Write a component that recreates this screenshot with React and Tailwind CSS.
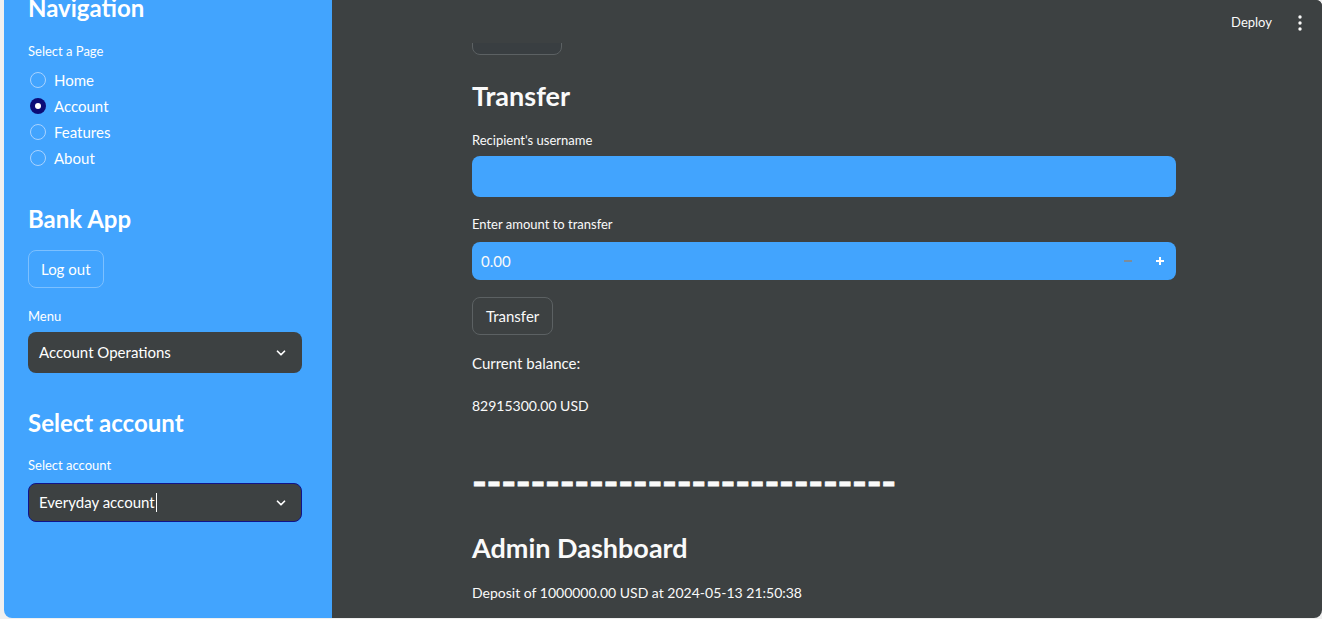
import { useState } from "react";

const font = { fontFamily: '"Lato", "Liberation Sans", sans-serif' };

function Chevron() {
  return (
    <svg width="14" height="14" viewBox="0 0 24 24" fill="none" stroke="currentColor" strokeWidth="3" strokeLinecap="round" strokeLinejoin="round">
      <path d="M6 9l6 6 6-6" />
    </svg>
  );
}

function Radio({ label, checked }) {
  return (
    <div className="flex items-center h-[26px] gap-[8px]">
      {checked ? (
        <span className="ml-[2px] w-[16px] h-[16px] rounded-full bg-[#0b0c77] flex items-center justify-center">
          <span className="w-[6px] h-[6px] rounded-full bg-white" />
        </span>
      ) : (
        <span className="ml-[2px] w-[16px] h-[16px] rounded-full border border-[#a9d3ff]" />
      )}
      <span className="text-[15px] text-white">{label}</span>
    </div>
  );
}

function Sidebar() {
  return (
    <div className="w-[328px] shrink-0 bg-[#42a4fe] text-white pl-[24px] pr-[30px] overflow-hidden">
      <h1 className="mt-[-8px] text-[24px] leading-[32px] font-bold">Navigation</h1>
      <p className="mt-[17px] text-[13px] leading-[20px]">Select a Page</p>
      <div className="mt-[6px]">
        <Radio label="Home" />
        <Radio label="Account" checked />
        <Radio label="Features" />
        <Radio label="About" />
      </div>
      <h2 className="mt-[32px] text-[24px] leading-[32px] font-bold">Bank App</h2>
      <button className="mt-[15px] h-[38px] px-[12px] rounded-[8px] border border-[#7cc0ff] text-[15px]">
        Log out
      </button>
      <p className="mt-[18px] text-[13px] leading-[20px]">Menu</p>
      <div className="mt-[6px] h-[41px] rounded-[8px] bg-[#3d4142] flex items-center justify-between pl-[11px] pr-[14px] text-[15px]">
        <span>Account Operations</span>
        <Chevron />
      </div>
      <h2 className="mt-[34px] text-[24px] leading-[32px] font-bold">Select account</h2>
      <p className="mt-[16px] text-[13px] leading-[20px]">Select account</p>
      <div className="mt-[8px] h-[39px] rounded-[8px] bg-[#3d4142] border border-[#10138a] flex items-center justify-between pl-[10px] pr-[13px] text-[15px]">
        <span className="flex items-center">
          Everyday account
          <span className="ml-[1px] w-[1px] h-[19px] bg-white" />
        </span>
        <Chevron />
      </div>
    </div>
  );
}

function Main() {
  const [amount] = useState("0.00");
  return (
    <div className="relative flex-1 bg-[#3d4142] text-[#fafafa] overflow-hidden">
      <div className="absolute top-0 left-0 right-0 h-[43px] bg-[#3d4142] flex items-center justify-end pr-[20px] gap-[26px] z-10">
        <span className="text-[13px] mt-[2px]">Deploy</span>
        <svg width="4" height="16" viewBox="0 0 4 16" className="mt-[2px]">
          <circle cx="2" cy="2" r="1.7" fill="#fafafa" />
          <circle cx="2" cy="8" r="1.7" fill="#fafafa" />
          <circle cx="2" cy="14" r="1.7" fill="#fafafa" />
        </svg>
      </div>
      <div className="pl-[140px] w-[844px] pt-[17px]">
        <div className="w-[90px] h-[38px] rounded-[8px] border border-[#5c6163] bg-[#393e41]" />
        <h2 className="mt-[21px] text-[27px] leading-[40px] font-bold">Transfer</h2>
        <p className="mt-[14px] text-[13px] leading-[20px]">Recipient's username</p>
        <div className="mt-[6px] h-[41px] rounded-[8px] bg-[#42a4fe]" />
        <p className="mt-[17px] text-[13px] leading-[20px]">Enter amount to transfer</p>
        <div className="mt-[8px] h-[38px] rounded-[8px] bg-[#42a4fe] flex items-center pl-[9px] text-[15px]">
          <span className="flex-1">{amount}</span>
          <span className="w-[32px] flex justify-center">
            <span className="w-[8px] h-[2px] bg-[#7e8c99]" />
          </span>
          <span className="w-[32px] flex justify-center text-white">
            <svg width="10" height="10" viewBox="0 0 10 10">
              <path d="M5 1v8M1 5h8" stroke="#ffffff" strokeWidth="2" />
            </svg>
          </span>
        </div>
        <button className="mt-[17px] h-[38px] px-[13px] rounded-[8px] border border-[#5c6163] text-[15px]">
          Transfer
        </button>
        <p className="mt-[16px] text-[15px] leading-[24px]">Current balance:</p>
        <p className="mt-[19px] text-[14px] leading-[24px]">82915300.00 USD</p>
        <p className="mt-[43px] h-[40px] text-[40px] leading-[40px] font-bold tracking-[-0.3px] [-webkit-text-stroke:0.8px_#fafafa] whitespace-nowrap">
          -----------------------------
        </p>
        <h2 className="mt-[27px] text-[27px] leading-[40px] font-bold">Admin Dashboard</h2>
        <p className="mt-[13px] text-[14px] leading-[24px]">Deposit of 1000000.00 USD at 2024-05-13 21:50:38</p>
      </div>
    </div>
  );
}

export default function App() {
  return (
    <div className="h-[619px] w-[1322px] bg-[#f0f0f0] pl-[4px] pb-[1px] overflow-hidden" style={font}>
      <div className="h-[618px] flex rounded-b-[8px] rounded-tr-[6px] overflow-hidden">
        <Sidebar />
        <Main />
      </div>
    </div>
  );
}
